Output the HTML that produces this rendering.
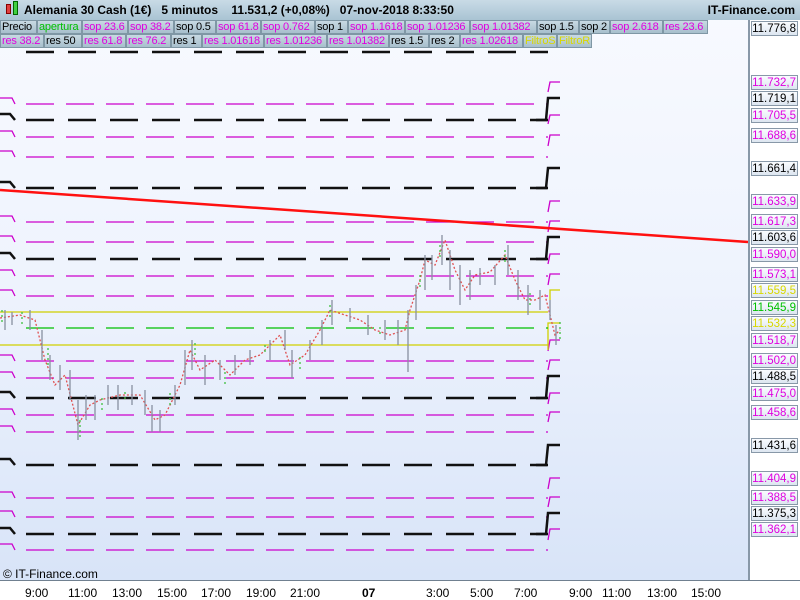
<!DOCTYPE html>
<html><head><meta charset="utf-8"><style>
*{margin:0;padding:0;box-sizing:border-box}
body{width:800px;height:600px;position:relative;overflow:hidden;font-family:"Liberation Sans",sans-serif;background:#fff}
#chart{position:absolute;left:0;top:0;width:748px;height:580px;background:linear-gradient(#f8faff 0%,#eef3fd 50%,#d8e4f8 100%)}
#hdr{position:absolute;left:0;top:0;width:800px;height:20px;background:linear-gradient(#c9dbe6,#a9c3d3);font-size:12px;font-weight:bold;line-height:20px;color:#000}
.b{position:absolute;height:14px;font-size:11px;line-height:13px;background:linear-gradient(#c8d9e3,#a7bfcc);border:1px solid #7f97a5;padding-left:1px;white-space:nowrap;overflow:hidden;letter-spacing:-0.2px}
.m{color:#e000e0}.k{color:#000}.g{color:#00c000}.y{color:#d8d800}
.l{position:absolute;left:751px;width:47px;height:15px;font-size:11.5px;line-height:14px;background:linear-gradient(#fafcff,#dde6f0);border:1px solid #8898a8;text-align:right;padding-right:1px}
#ax{position:absolute;left:0;top:580px;width:800px;height:20px;background:#fff;border-top:1px solid #708090;font-size:12px}
#ax span{position:absolute;top:5px}
#rax{position:absolute;left:748px;top:20px;width:2px;height:561px;background:#8898a8}
</style></head><body>
<div id="chart"></div>
<svg width="800" height="600" style="position:absolute;left:0;top:0">
<g fill="none">
<g stroke="#cc00cc" stroke-width="1.3" stroke-dasharray="28 12">
<path d="M26 104H548M26 137H548M26 157H548M26 222H548M26 242H548M26 276H548M26 296H548M26 361H548M26 378H548M26 415H548M26 432H548M26 498H548M26 517H548M26 550H548"/>
</g>
<g stroke="#cc00cc" stroke-width="1.3">
<path d="M0 98H12L15 104M0 131H12L15 137M0 151H12L15 157M0 216H12L15 222M0 236H12L15 242M0 270H12L15 276M0 290H12L15 296M0 355H12L15 361M0 372H12L15 378M0 409H12L15 415M0 426H12L15 432M0 492H12L15 498M0 511H12L15 517M0 544H12L15 550"/>
<path d="M548 92L550 82H560M548 124L550 115H560M548 146L550 135H560M548 212L550 201H560M548 232L550 221H560M548 264L550 254H560M548 285L550 274H560M548 351L550 340H560M548 370L550 360H560M548 404L550 393H560M548 422L550 412H560M548 489L550 478H560M548 507L550 497H560M548 540L550 529H560"/>
</g>
<g stroke="#111" stroke-width="2.5" stroke-dasharray="28 14">
<path d="M26 120H548M26 188H548M26 259H548M26 398H548M26 465H548M26 534H548M26 52H548"/>
</g>
<g stroke="#111" stroke-width="2.5">
<path d="M0 114H10L15 120M0 182H10L15 188M0 253H10L15 259M0 392H10L15 398M0 459H10L15 465M0 528H10L15 534"/>
<path d="M536 120H546L548 98H560M536 188H546L548 168H560M536 259H546L548 237H560M536 398H546L548 376H560M536 465H546L548 445H560M536 534H546L548 513H560"/>
</g>
<g stroke="#d0d000" stroke-width="1.3"><path d="M0 312H548M550 300V290H560M0 345H548M548 350V323H560"/></g>
<g stroke="#00c000" stroke-width="1.3" stroke-dasharray="28 12"><path d="M26 328H548"/></g>
<path d="M0 190L748 242" stroke="#ff1010" stroke-width="2.5"/>
<g stroke-width="1.3">
<path stroke="#e05050" stroke-dasharray="2 2" d="M0 318L20 315 35 320 45 360 55 385 65 375 78 425 90 405 100 400 120 395 140 395 155 420 165 415 180 385 190 350 200 370 215 360 230 375 245 360 260 355 280 335 290 365 305 355 320 330 330 310 345 315 360 320 375 330 390 335 405 330 410 310 420 280 425 260 435 265 445 240 455 270 465 290 475 275 490 272 505 255 515 280 525 300 535 300 545 295 550 315 555 335 560 330"/>
<path stroke="#40c040" stroke-dasharray="2 3" d="M2 322V308M22 312V325M48 365V345M80 420V438M102 398V410M125 392V402M170 405V392M195 355V340M225 372V385M265 352V345M300 357V370M330 305V320M380 327V335M420 275V290M440 245V260M470 285V270M505 250V265M530 305V290M560 322V340"/>
<path stroke="#8890a0" d="M5 310V330M12 312V325M30 310V330M42 330V360M50 355V380M60 365V390M70 370V400M78 400V440M86 395V420M95 395V420M108 385V405M118 385V410M132 385V405M145 390V415M152 405V432M160 410V432M175 385V405M185 350V385M192 340V370M205 355V385M220 360V380M235 355V375M250 350V365M270 340V360M285 330V350M292 350V378M310 340V360M322 320V345M332 300V325M350 308V322M368 315V335M385 320V340M398 320V345M408 310V372M416 285V320M425 255V290M432 255V280M442 235V265M450 250V290M460 265V305M470 270V300M480 268V285M495 265V285M508 245V275M518 270V300M528 285V315M540 290V310M550 300V320M556 325V345"/>
</g>
</g>
</svg>
<div id="rax"></div>
<div id="hdr"><span style="position:absolute;left:6px;top:4px;width:5px;height:10px;background:#e04040;border:1px solid #800"></span><span style="position:absolute;left:13px;top:1px;width:5px;height:14px;background:#40d040;border:1px solid #060"></span><span style="position:absolute;left:24px">Alemania 30 Cash (1€) &nbsp; 5 minutos &nbsp; &nbsp;11.531,2 (+0,08%) &nbsp; 07-nov-2018 8:33:50</span><span style="position:absolute;right:5px">IT-Finance.com</span></div>
<div class="b k" style="left:0;top:20px;width:37px">Precio</div>
<div class="b g" style="left:37px;top:20px;width:45px">apertura</div>
<div class="b m" style="left:82px;top:20px;width:46px">sop 23.6</div>
<div class="b m" style="left:128px;top:20px;width:46px">sop 38.2</div>
<div class="b k" style="left:174px;top:20px;width:42px">sop 0.5</div>
<div class="b m" style="left:216px;top:20px;width:45px">sop 61.8</div>
<div class="b m" style="left:261px;top:20px;width:54px">sop 0.762</div>
<div class="b k" style="left:315px;top:20px;width:33px">sop 1</div>
<div class="b m" style="left:348px;top:20px;width:57px">sop 1.1618</div>
<div class="b m" style="left:405px;top:20px;width:65px">sop 1.01236</div>
<div class="b m" style="left:470px;top:20px;width:67px">sop 1.01382</div>
<div class="b k" style="left:537px;top:20px;width:42px">sop 1.5</div>
<div class="b k" style="left:579px;top:20px;width:31px">sop 2</div>
<div class="b m" style="left:610px;top:20px;width:53px">sop 2.618</div>
<div class="b m" style="left:663px;top:20px;width:45px">res 23.6</div>
<div class="b m" style="left:0;top:34px;width:44px">res 38.2</div>
<div class="b k" style="left:44px;top:34px;width:38px">res 50</div>
<div class="b m" style="left:82px;top:34px;width:44px">res 61.8</div>
<div class="b m" style="left:126px;top:34px;width:45px">res 76.2</div>
<div class="b k" style="left:171px;top:34px;width:31px">res 1</div>
<div class="b m" style="left:202px;top:34px;width:62px">res 1.01618</div>
<div class="b m" style="left:264px;top:34px;width:63px">res 1.01236</div>
<div class="b m" style="left:327px;top:34px;width:62px">res 1.01382</div>
<div class="b k" style="left:389px;top:34px;width:40px">res 1.5</div>
<div class="b k" style="left:429px;top:34px;width:31px">res 2</div>
<div class="b m" style="left:460px;top:34px;width:63px">res 1.02618</div>
<div class="b y" style="left:523px;top:34px;width:34px">FiltroS</div>
<div class="b y" style="left:557px;top:34px;width:35px">FiltroR</div>
<div class="l k" style="top:21px">11.776,8</div>
<div class="l m" style="top:75px">11.732,7</div>
<div class="l k" style="top:91px">11.719,1</div>
<div class="l m" style="top:108px">11.705,5</div>
<div class="l m" style="top:128px">11.688,6</div>
<div class="l k" style="top:161px">11.661,4</div>
<div class="l m" style="top:194px">11.633,9</div>
<div class="l m" style="top:214px">11.617,3</div>
<div class="l k" style="top:230px">11.603,6</div>
<div class="l m" style="top:247px">11.590,0</div>
<div class="l m" style="top:267px">11.573,1</div>
<div class="l y" style="top:283px">11.559,5</div>
<div class="l g" style="top:300px">11.545,9</div>
<div class="l y" style="top:316px">11.532,3</div>
<div class="l m" style="top:333px">11.518,7</div>
<div class="l m" style="top:353px">11.502,0</div>
<div class="l k" style="top:369px">11.488,5</div>
<div class="l m" style="top:386px">11.475,0</div>
<div class="l m" style="top:405px">11.458,6</div>
<div class="l k" style="top:438px">11.431,6</div>
<div class="l m" style="top:471px">11.404,9</div>
<div class="l m" style="top:490px">11.388,5</div>
<div class="l k" style="top:506px">11.375,3</div>
<div class="l m" style="top:522px">11.362,1</div>
<div style="position:absolute;left:3px;top:567px;font-size:12px">© IT-Finance.com</div>
<div id="ax">
<span style="left:25px">9:00</span><span style="left:68px">11:00</span><span style="left:112px">13:00</span><span style="left:157px">15:00</span><span style="left:201px">17:00</span><span style="left:246px">19:00</span><span style="left:290px">21:00</span><span style="left:362px;font-weight:bold">07</span><span style="left:426px">3:00</span><span style="left:470px">5:00</span><span style="left:514px">7:00</span><span style="left:569px">9:00</span><span style="left:602px">11:00</span><span style="left:647px">13:00</span><span style="left:691px">15:00</span>
</div>
</body></html>
